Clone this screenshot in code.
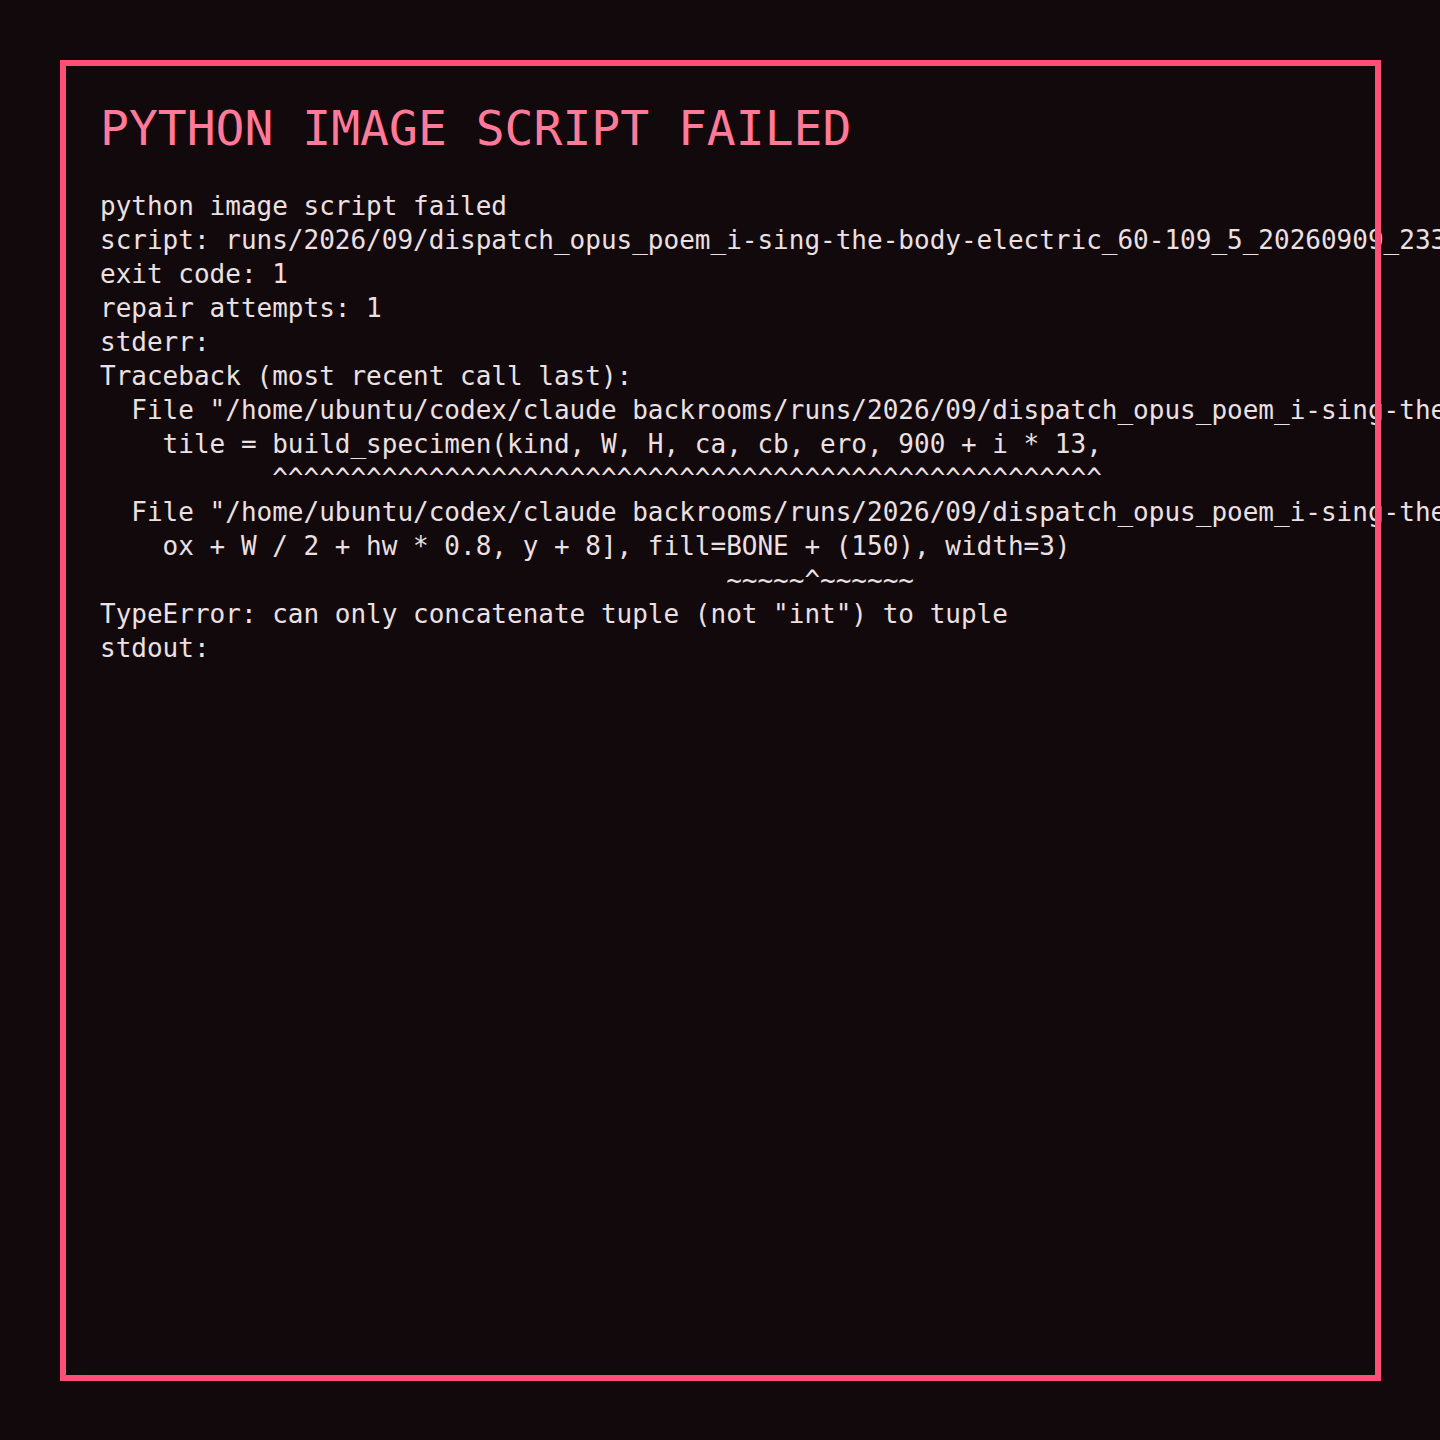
const title = "PYTHON IMAGE SCRIPT FAILED";

const lines = [
  "python image script failed",
  "script: runs/2026/09/dispatch_opus_poem_i-sing-the-body-electric_60-109_5_20260909_233",
  "exit code: 1",
  "repair attempts: 1",
  "stderr:",
  "Traceback (most recent call last):",
  '  File "/home/ubuntu/codex/claude backrooms/runs/2026/09/dispatch_opus_poem_i-sing-the',
  "    tile = build_specimen(kind, W, H, ca, cb, ero, 900 + i * 13,",
  "           " + "^".repeat(53),
  '  File "/home/ubuntu/codex/claude backrooms/runs/2026/09/dispatch_opus_poem_i-sing-the',
  "    ox + W / 2 + hw * 0.8, y + 8], fill=BONE + (150), width=3)",
  " ".repeat(40) + "~~~~~^~~~~~~",
  'TypeError: can only concatenate tuple (not "int") to tuple',
  "stdout:",
];

export default function App() {
  return (
    <div
      className="w-[1440px] h-[1440px] overflow-hidden bg-[#12090c] p-[60px]"
      style={{ fontFamily: '"DejaVu Sans Mono", "Liberation Mono", monospace' }}
    >
      <div className="relative w-[1321px] h-[1321px] pt-[40px] pl-[40px]">
        {/* frame sits over the text, like the original render */}
        <div className="absolute inset-0 border-[6px] border-[#ff4f76] pointer-events-none z-10" />
        <h1 className="text-[48px] leading-[56px] text-[#ff7a98] whitespace-pre">{title}</h1>
        <div className="mt-[33px] text-[26px] leading-[34px] text-[#ece0e2] whitespace-pre">
          {lines.map((l, i) => (
            <div key={i}>{l}</div>
          ))}
        </div>
      </div>
    </div>
  );
}
